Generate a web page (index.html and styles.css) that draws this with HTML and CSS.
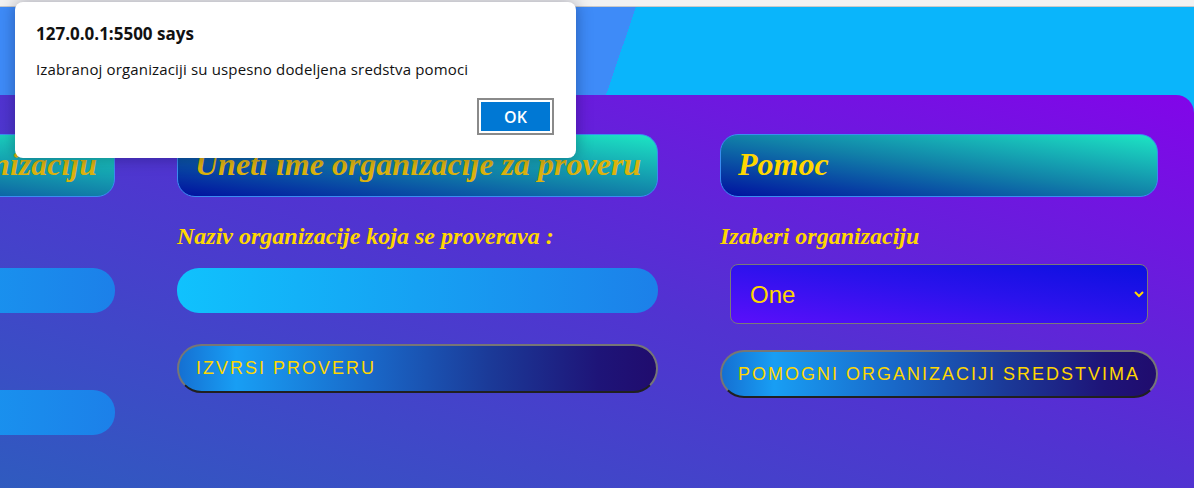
FILE: index.html
```html
<!DOCTYPE html>
<html lang="sr">
<head>
<meta charset="utf-8">
<title>Organizacije</title>
<link rel="stylesheet" href="styles.css">
</head>
<body>
<div class="chrome-strip"></div>
<div class="banner"></div>
<main class="panel">
  <div class="columns">
    <section class="col col-add">
      <h2 class="box-title title-dark title-right">Dodavanje nove organizaciju</h2>
      <div class="text-input input-first"></div>
      <div class="text-input input-second"></div>
    </section>
    <section class="col col-check">
      <h2 class="box-title title-dark">Uneti ime organizacije za proveru</h2>
      <label class="field-label">Naziv organizacije koja se proverava :</label>
      <div class="text-input"></div>
      <button class="action-btn btn-check">IZVRSI PROVERU</button>
    </section>
    <section class="col col-help">
      <h2 class="box-title title-bright">Pomoc</h2>
      <label class="field-label">Izaberi organizaciju</label>
      <select class="org-select"><option>One</option></select>
      <button class="action-btn btn-help">POMOGNI ORGANIZACIJI SREDSTVIMA</button>
    </section>
  </div>
</main>

<div class="dialog">
  <div class="dialog-title">127.0.0.1:5500 says</div>
  <div class="dialog-msg">Izabranoj organizaciji su uspesno dodeljena sredstva pomoci</div>
  <div class="dialog-actions">
    <button class="ok-btn">OK</button>
  </div>
</div>
</body>
</html>
```

FILE: styles.css
```css
* { box-sizing: border-box; }

html, body {
  margin: 0;
  padding: 0;
}

body {
  width: 1194px;
  height: 488px;
  overflow: hidden;
  font-family: "Liberation Sans", Arial, sans-serif;
  background: #0ab5fb;
  position: relative;
}

.chrome-strip {
  height: 7px;
  background: #f2f2f2;
  border-bottom: 1px solid #c9c9c9;
}

.banner {
  height: 88px;
  background: linear-gradient(108.8deg, #3e8bf8 0, #3e8bf8 602px, #0ab5fb 602px, #0ab5fb 100%);
}

.panel {
  height: 393px;
  border-top-right-radius: 18px;
  background: linear-gradient(to top right, #2f5bbf 0%, #5133d1 50%, #8205e9 100%);
  padding-top: 39px;
}

.columns {
  display: flex;
  gap: 62px;
  margin-left: -366px;
}

.col {
  display: flex;
  flex-direction: column;
  align-items: stretch;
}

.col-add, .col-check { width: 481px; }
.col-help { width: 438px; }

.box-title {
  margin: 0;
  height: 63px;
  border: 1px solid #3a8cf2;
  border-radius: 18px;
  background: linear-gradient(to top right, #0010a0 0%, #1180a8 50%, #1de6c4 100%);
  font-family: "Liberation Serif", "Times New Roman", serif;
  font-style: italic;
  font-weight: bold;
  font-size: 32px;
  line-height: 58px;
  padding: 0 17px;
  white-space: nowrap;
  overflow: hidden;
}

.title-dark { color: #dcb20e; }
.title-bright { color: #ffd700; }
.title-right { text-align: right; }

.field-label {
  display: block;
  margin-top: 25px;
  height: 28px;
  font-family: "Liberation Serif", "Times New Roman", serif;
  font-style: italic;
  font-weight: bold;
  font-size: 24px;
  line-height: 28px;
  color: #ffd700;
  white-space: nowrap;
}

.text-input {
  margin-top: 18px;
  height: 45px;
  border-radius: 22px;
  background: linear-gradient(to right, #10c2fd, #1c80e9);
}

.col-add .input-first { margin-top: 71px; }
.col-add .input-second { margin-top: 77px; }

.action-btn {
  height: 49px;
  border-radius: 25px;
  border: 2px solid;
  border-color: #767676 #767676 #202020 #767676;
  background: linear-gradient(to right, #1570d2 0%, #189ef4 12%, #1968c8 40%, #1b3a98 65%, #1e1478 88%, #200c6e 100%);
  color: #ffd700;
  font-family: "Liberation Sans", Arial, sans-serif;
  font-size: 18px;
  letter-spacing: 2px;
  text-align: left;
  padding: 0 17px;
}

.btn-check { margin-top: 31px; }
.btn-help { margin-top: 26px; height: 48px; text-align: center; padding: 0 10px; }

.org-select {
  margin: 14px 10px 0 10px;
  height: 60px;
  border: 1px solid #7a7a7a;
  border-radius: 8px;
  background: linear-gradient(to top right, #5a0ffa 0%, #2a12ec 55%, #0b10e0 100%);
  color: #ffd700;
  font-family: "Liberation Sans", Arial, sans-serif;
  font-size: 24px;
  padding: 0 8px 0 15px;
}

.dialog {
  position: absolute;
  left: 15px;
  top: 2px;
  width: 561px;
  height: 156px;
  background: #fff;
  border-radius: 8px;
  box-shadow: 0 0 16px rgba(0, 0, 40, 0.35);
  padding: 20px 22px 0 21px;
  font-family: "Open Sans", "Noto Sans", sans-serif;
  color: #111;
}

.dialog-title {
  font-size: 17px;
  font-weight: bold;
  line-height: 24px;
}

.dialog-msg {
  margin-top: 13px;
  font-size: 15px;
  line-height: 20px;
  letter-spacing: 0.15px;
}

.dialog-actions {
  display: flex;
  justify-content: flex-end;
  margin-top: 19px;
}

.ok-btn {
  width: 77px;
  height: 37px;
  border: 2px solid #8a8a8a;
  box-shadow: inset 0 0 0 2px #fff;
  background: #0078d4;
  color: #fff;
  font-family: "Open Sans", "Noto Sans", sans-serif;
  font-weight: 600;
  font-size: 16px;
  padding: 0;
}
```
